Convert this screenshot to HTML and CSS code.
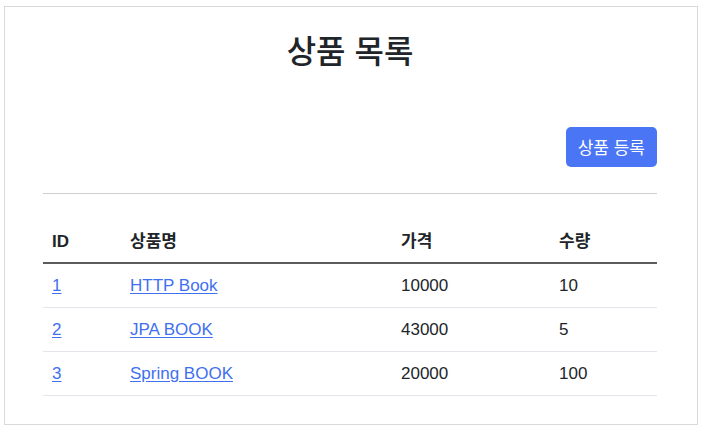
FILE: index.html
```html
<!DOCTYPE html>
<html lang="ko">
<head>
<meta charset="utf-8">
<title>상품 목록</title>
<link rel="stylesheet" href="styles.css">
</head>
<body>
<div class="frame">
  <div class="container">
    <h2 class="title">상품 목록</h2>
    <div class="actions">
      <button class="btn" type="button">상품 등록</button>
    </div>
    <hr class="divider">
    <table class="table">
      <colgroup>
        <col class="c-id"><col class="c-name"><col class="c-price"><col class="c-qty">
      </colgroup>
      <thead>
        <tr><th>ID</th><th>상품명</th><th>가격</th><th>수량</th></tr>
      </thead>
      <tbody>
        <tr><td><a href="#">1</a></td><td><a href="#">HTTP Book</a></td><td>10000</td><td>10</td></tr>
        <tr><td><a href="#">2</a></td><td><a href="#">JPA BOOK</a></td><td>43000</td><td>5</td></tr>
        <tr><td><a href="#">3</a></td><td><a href="#">Spring BOOK</a></td><td>20000</td><td>100</td></tr>
      </tbody>
    </table>
  </div>
</div>
</body>
</html>
```

FILE: styles.css
```css
html, body {
  margin: 0;
  padding: 0;
  background: #ffffff;
}
body {
  font-family: "Liberation Sans", "Noto Sans CJK KR", sans-serif;
  font-size: 17px;
  line-height: 25px;
  color: #212529;
}
.frame {
  margin: 6px 5px 0 4px;
  height: 419px;
  border: 1px solid #d9d9d9;
  box-sizing: border-box;
}
.container {
  width: 614px;
  margin: 0 0 0 38px;
}
.title {
  margin: 0;
  padding-top: 22px;
  text-align: center;
  font-family: "Noto Sans CJK KR", sans-serif;
  font-weight: 500;
  font-size: 32px;
  line-height: 40px;
  color: #212529;
}
.actions {
  display: flex;
  justify-content: flex-end;
  margin-top: 58px;
}
.btn {
  height: 40px;
  padding: 0 12px;
  border: none;
  border-radius: 5px;
  background: #4a76f5;
  color: #ffffff;
  font-family: "Noto Sans CJK KR", sans-serif;
  font-size: 17px;
  line-height: 40px;
  cursor: pointer;
}
.divider {
  margin: 26px 0 0 0;
  border: 0;
  border-top: 1px solid #cfcfcf;
  height: 0;
}
.table {
  width: 100%;
  margin-top: 26px;
  border-collapse: collapse;
}
.c-id { width: 78px; }
.c-name { width: 271px; }
.c-price { width: 158px; }
.c-qty { width: 107px; }
.table th, .table td {
  padding: 9px 9px 9px 9px;
  text-align: left;
  vertical-align: top;
}
.table th {
  font-weight: 700;
  font-family: "Liberation Sans", "Noto Sans CJK KR", sans-serif;
  border-bottom: 2px solid #5c5c5c;
  padding-bottom: 8px;
}
.table td {
  border-bottom: 1px solid #e2e5e9;
}
.table a {
  color: #3f70f0;
  text-decoration: underline;
  text-underline-offset: 2px;
}
```
